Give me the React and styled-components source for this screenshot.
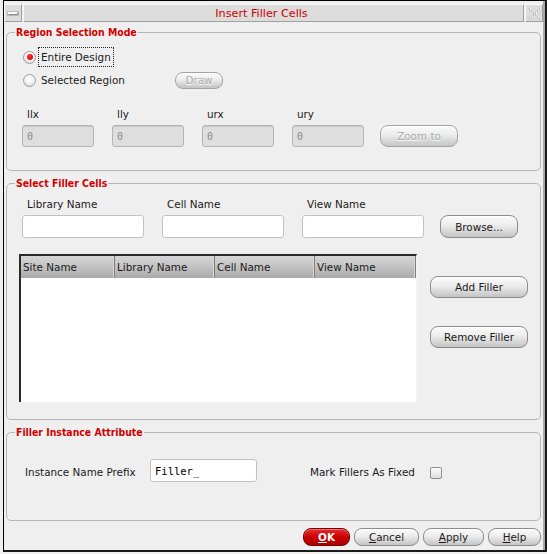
import React from "react";
import styled, { createGlobalStyle, css } from "styled-components";

const GlobalStyle = createGlobalStyle`
  html, body { margin: 0; padding: 0; background: #efefef; }
  body { font-family: "DejaVu Sans", "Liberation Sans", sans-serif; font-size: 10.4px; color: #1a1a1a; }
  * { box-sizing: border-box; }
`;

const Outer = styled.div`
  margin-left: 3px;
  width: 544px;
  height: 552px;
  border-left: 1px solid #000;
  border-top: 1px solid #000;
  border-right: 2px solid #1a1a1a;
  border-bottom: 2px solid #1a1a1a;
  background: #efefef;
`;

const Window = styled.div`
  height: 100%;
  border-right: 2px solid #a9a9a9;
  display: flex;
  flex-direction: column;
`;

const TitleBar = styled.div`
  height: 22px;
  display: flex;
  align-items: stretch;
  padding: 3px 0 1px 0;
  gap: 1px;
`;

const TitleBox = styled.div`
  width: ${(p) => p.$w}px;
  background: #dcdcdc;
  border: 1px solid #f8f8f8;
  border-right-color: #a0a0a0;
  border-bottom-color: #a0a0a0;
  display: flex;
  align-items: center;
  justify-content: center;
`;

const TitleCenter = styled.div`
  flex: 1;
  background: #dcdcdc;
  border: 1px solid #f8f8f8;
  border-right-color: #a0a0a0;
  border-bottom-color: #a0a0a0;
  color: #cc0000;
  font-size: 11.2px;
  display: flex;
  align-items: center;
  justify-content: center;
  padding-right: 24px;
`;

const MinBar = styled.div`
  width: 10px;
  height: 3px;
  background: #fafafa;
  border: 1px solid #8a8a8a;
  border-left-color: #ffffff;
  border-top-color: #ffffff;
  box-shadow: 0 0 0 1px #b8b8b8;
`;

const Group = styled.fieldset`
  margin: ${(p) => p.$mt}px 2px 0 2px;
  height: ${(p) => p.$h}px;
  padding: 0;
  border: 1px solid #b6b6b6;
  border-radius: 5px;
  min-width: 0;
`;

const Legend = styled.legend`
  margin-left: 8px;
  padding: 0 1px;
  font-weight: bold;
  font-size: 10.4px;
  font-stretch: condensed;
  line-height: 14px;
  color: #d00000;
`;

const RadioList = styled.div`
  padding: 8px 0 0 16px;
  display: flex;
  flex-direction: column;
  gap: 3px;
`;

const RadioRow = styled.div`
  height: 20px;
  display: flex;
  align-items: center;
`;

const RadioCircle = styled.span`
  width: 13px;
  height: 13px;
  border-radius: 50%;
  border: 1px solid #9c9c9c;
  background: radial-gradient(circle at 50% 35%, #ffffff 0%, #f4f4f4 45%, #cfcfcf 100%);
  display: flex;
  align-items: center;
  justify-content: center;
  margin-right: 2px;
  &::after {
    content: "";
    width: 6px;
    height: 6px;
    border-radius: 50%;
    background: ${(p) => (p.$on ? "radial-gradient(circle at 40% 35%, #ff3030, #c00000)" : "transparent")};
  }
`;

const RadioLabel = styled.span`
  height: 20px;
  display: flex;
  align-items: center;
  padding: 0 2px;
  border: 1px dotted ${(p) => (p.$focus ? "#222" : "transparent")};
  width: ${(p) => (p.$w ? `${p.$w}px` : "auto")};
`;

const buttonBase = css`
  font-family: "DejaVu Sans", "Liberation Sans", sans-serif;
  font-size: 10.4px;
  border: 1px solid #8c8c8c;
  border-radius: 8px;
  background: linear-gradient(#fbfbfb 0%, #ececec 45%, #d6d6d6 75%, #c4c4c4 100%);
  color: #1a1a1a;
  padding: 0;
  display: flex;
  align-items: center;
  justify-content: center;
  box-shadow: inset 0 1px 0 #ffffff;
`;

const Button = styled.button`
  ${buttonBase}
  width: ${(p) => p.$w}px;
  height: ${(p) => p.$h || 22}px;
  ${(p) =>
    p.disabled &&
    css`
      color: #a8a8a8;
      text-shadow: 0 1px 0 #ffffff;
      border-color: #a4a4a4;
    `}
`;

const OkButton = styled.button`
  ${buttonBase}
  width: ${(p) => p.$w}px;
  height: 18px;
  border-color: #7a0000;
  background: linear-gradient(#e23030 0%, #c80000 50%, #a80000 100%);
  color: #ffffff;
  font-weight: bold;
  box-shadow: inset 0 1px 0 #f07070;
`;

const DialogButton = styled.button`
  ${buttonBase}
  width: ${(p) => p.$w}px;
  height: 18px;
`;

const U = styled.span`
  text-decoration: underline;
`;

const CoordGrid = styled.div`
  margin-top: 17px;
  padding-left: 15px;
  display: grid;
  grid-template-columns: repeat(4, 72px) 78px;
  grid-template-rows: 14px 22px;
  column-gap: 18px;
  row-gap: 4px;
`;

const FieldLabel = styled.span`
  line-height: 14px;
  padding-left: 5px;
  white-space: nowrap;
`;

const DisabledInput = styled.div`
  height: 22px;
  border: 1px solid #b4b4b4;
  border-radius: 3px;
  background: #dedede;
  font-family: "DejaVu Sans Mono", "Liberation Mono", monospace;
  font-size: 10px;
  color: #8a8a8a;
  display: flex;
  align-items: center;
  padding-left: 4px;
  box-shadow: inset 0 1px 0 #c8c8c8;
`;

const ZoomCell = styled.div`
  grid-row: 2;
  grid-column: 5;
  margin-left: -2px;
`;

const NameGrid = styled.div`
  padding: 7px 0 0 15px;
  display: grid;
  grid-template-columns: repeat(3, 122px) 78px;
  grid-template-rows: 14px 23px;
  column-gap: 18px;
  row-gap: 4px;
`;

const TextInput = styled.div`
  height: ${(p) => p.$h || 23}px;
  width: ${(p) => (p.$w ? `${p.$w}px` : "auto")};
  border: 1px solid #c2c2c2;
  border-radius: 3px;
  background: #ffffff;
  display: flex;
  align-items: center;
  padding-left: 4px;
  font-family: "DejaVu Sans Mono", "Liberation Mono", monospace;
  font-size: 10.5px;
  color: #000;
`;

const BrowseCell = styled.div`
  grid-row: 2;
  grid-column: 4;
  margin-left: -2px;
`;

const TableArea = styled.div`
  display: flex;
  margin-top: 16px;
  padding-left: 12px;
  gap: 13px;
`;

const Table = styled.div`
  width: 398px;
  height: 148px;
  background: #ffffff;
  border-top: 2px solid #2a2a2a;
  border-left: 2px solid #2a2a2a;
  border-right: 1px solid #f4f4f4;
`;

const HeaderRow = styled.div`
  display: grid;
  grid-template-columns: 94px 100px 100px 1fr;
  height: 22px;
  background: linear-gradient(#d6d6d6, #c0c0c0 55%, #a9a9a9);
`;

const HeaderCell = styled.div`
  display: flex;
  align-items: center;
  padding-left: 2px;
  border-right: 1px solid #7c7c7c;
  box-shadow: inset -1px 0 0 #d8d8d8;
  white-space: nowrap;
`;

const SideButtons = styled.div`
  display: flex;
  flex-direction: column;
  padding-top: 22px;
  gap: 28px;
`;

const AttrRow = styled.div`
  padding: 20px 0 0 18px;
  display: flex;
  align-items: center;
  height: 43px;
`;

const AttrLabel = styled.span`
  width: ${(p) => p.$w}px;
  margin-left: ${(p) => p.$ml || 0}px;
  padding-top: 3px;
  white-space: nowrap;
`;

const Checkbox = styled.span`
  width: 12px;
  height: 12px;
  border: 1px solid #8e8e8e;
  border-radius: 2px;
  background: linear-gradient(#fdfdfd, #dcdcdc);
  margin-top: 4px;
`;

const ButtonBar = styled.div`
  margin-top: 7px;
  display: flex;
  justify-content: flex-end;
  padding-right: 2px;
  gap: 4px;
`;

function CloseIcon() {
  const pts = [];
  for (let i = 0; i < 6; i++) {
    pts.push([2 + i * 2, 2 + i * 2]);
    pts.push([12 - i * 2, 2 + i * 2]);
  }
  return (
    <svg width="15" height="15" viewBox="0 0 15 15">
      {pts.map(([x, y], i) => (
        <rect key={i} x={x} y={y} width="1.5" height="1.5" fill="#b4b4b4" />
      ))}
      {pts.map(([x, y], i) => (
        <rect key={"w" + i} x={x + 1} y={y} width="1" height="1" fill="#ffffff" />
      ))}
    </svg>
  );
}

export default function App() {
  return (
    <>
      <GlobalStyle />
      <Outer>
        <Window>
          <TitleBar>
            <TitleBox $w={18}>
              <MinBar />
            </TitleBox>
            <TitleCenter>Insert Filler Cells</TitleCenter>
            <TitleBox $w={18}>
              <CloseIcon />
            </TitleBox>
          </TitleBar>

          <Group $mt={2} $h={146}>
            <Legend>Region Selection Mode</Legend>
            <RadioList>
              <RadioRow>
                <RadioCircle $on />
                <RadioLabel $focus>Entire Design</RadioLabel>
              </RadioRow>
              <RadioRow>
                <RadioCircle />
                <RadioLabel $w={137}>Selected Region</RadioLabel>
                <Button disabled $w={48} $h={17}>Draw</Button>
              </RadioRow>
            </RadioList>
            <CoordGrid>
              <FieldLabel>llx</FieldLabel>
              <FieldLabel>lly</FieldLabel>
              <FieldLabel>urx</FieldLabel>
              <FieldLabel>ury</FieldLabel>
              <span />
              <DisabledInput>0</DisabledInput>
              <DisabledInput>0</DisabledInput>
              <DisabledInput>0</DisabledInput>
              <DisabledInput>0</DisabledInput>
              <ZoomCell>
                <Button disabled $w={78} $h={22}>Zoom to</Button>
              </ZoomCell>
            </CoordGrid>
          </Group>

          <Group $mt={5} $h={244}>
            <Legend>Select Filler Cells</Legend>
            <NameGrid>
              <FieldLabel>Library Name</FieldLabel>
              <FieldLabel>Cell Name</FieldLabel>
              <FieldLabel>View Name</FieldLabel>
              <span />
              <TextInput />
              <TextInput />
              <TextInput />
              <BrowseCell>
                <Button $w={78} $h={23}>Browse...</Button>
              </BrowseCell>
            </NameGrid>
            <TableArea>
              <Table>
                <HeaderRow>
                  <HeaderCell>Site Name</HeaderCell>
                  <HeaderCell>Library Name</HeaderCell>
                  <HeaderCell>Cell Name</HeaderCell>
                  <HeaderCell>View Name</HeaderCell>
                </HeaderRow>
              </Table>
              <SideButtons>
                <Button $w={98} $h={22}>Add Filler</Button>
                <Button $w={98} $h={22}>Remove Filler</Button>
              </SideButtons>
            </TableArea>
          </Group>

          <Group $mt={5} $h={96}>
            <Legend>Filler Instance Attribute</Legend>
            <AttrRow>
              <AttrLabel $w={125}>Instance Name Prefix</AttrLabel>
              <TextInput $w={107}>Filler_</TextInput>
              <AttrLabel $w={120} $ml={53}>Mark Fillers As Fixed</AttrLabel>
              <Checkbox />
            </AttrRow>
          </Group>

          <ButtonBar>
            <OkButton $w={47}><U>O</U>K</OkButton>
            <DialogButton $w={65}><U>C</U>ancel</DialogButton>
            <DialogButton $w={61}><U>A</U>pply</DialogButton>
            <DialogButton $w={53}><U>H</U>elp</DialogButton>
          </ButtonBar>
        </Window>
      </Outer>
    </>
  );
}
